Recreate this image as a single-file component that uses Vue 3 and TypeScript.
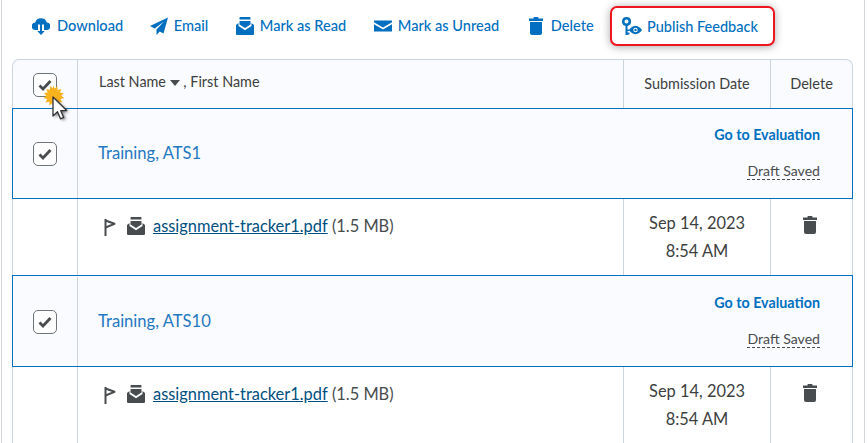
<script setup lang="ts">
interface Tool { label: string; icon: string }
const tools: Tool[] = [
  { label: 'Download', icon: 'download' },
  { label: 'Email', icon: 'send' },
  { label: 'Mark as Read', icon: 'read' },
  { label: 'Mark as Unread', icon: 'mail' },
  { label: 'Delete', icon: 'trash' },
]
const students = ['Training, ATS1', 'Training, ATS10']
</script>

<template>
  <div class="page">
    <div class="toolbar">
      <button v-for="t in tools" :key="t.label" class="tool">
        <svg class="ico" viewBox="0 0 18 18" fill="#006fbf">
          <template v-if="t.icon === 'download'">
            <path d="M6 13H3.700a3.700 3.700 0 0 1-.5-7.400A6 6 0 0 1 14.800 5.600 3.700 3.700 0 0 1 14.300 13H12V7.500H6z" />
            <path d="M8 7h2v7h2.800L9 18l-3.800-4H8z" />
          </template>
          <path v-else-if="t.icon === 'send'" d="M18 0.500 0 9l4.700 2.400L14 4.500 6.500 12.500V18l3.200-3.600 3.800 2z" />
          <template v-else-if="t.icon === 'read'">
            <path d="M4.500 0h9a1 1 0 0 1 1 1v1.500h-11V1a1 1 0 0 1 1-1zM3.500 4h11v3.500L9 11 3.500 7.500z" />
            <path d="M0 8l2.500-2v3L9 13.200 15.500 9V6L18 8v9a1 1 0 0 1-1 1H1a1 1 0 0 1-1-1z" />
          </template>
          <template v-else-if="t.icon === 'mail'">
            <path d="M0 3.500h18v1.700l-9 5.300-9-5.300z" />
            <path d="M0 7.200l9 5.300 9-5.300v7.300H0z" />
          </template>
          <template v-else>
            <path d="M6.500 1.500V.8a.8.8 0 0 1 .8-.8h3.400a.8.8 0 0 1 .8.800v.7H16v2.500H2V1.500z" />
            <path d="M3 5h12v11a2 2 0 0 1-2 2H5a2 2 0 0 1-2-2z" />
          </template>
        </svg>
        <span>{{ t.label }}</span>
      </button>
      <div class="tool highlight">
        <svg class="ico" viewBox="0 0 20 18" fill="#006fbf">
          <path fill-rule="evenodd" d="M4.500 0a4.500 4.500 0 0 1 1 8.900V12.500H7.500V14H5.500v1.500H7.500V17L5.500 18H3.500V8.900A4.500 4.500 0 0 1 4.500 0zm0 2.500a2 2 0 1 0 0 4 2 2 0 0 0 0-4z" />
          <path fill-rule="evenodd" d="M13.500 8.800c3 0 5.200 2.300 6.500 4.200-1.300 1.900-3.500 4.200-6.500 4.200S8.300 14.900 7 13c1.300-1.900 3.500-4.200 6.500-4.200zm0 2a2.200 2.200 0 1 0 0 4.400 2.200 2.200 0 0 0 0-4.400z" />
          <circle cx="13.500" cy="13" r="1.200" />
        </svg>
        <span>Publish Feedback</span>
      </div>
    </div>

    <div class="table">
      <div class="head">
        <div class="c-check"><span class="box"><svg viewBox="0 0 14 12" class="tick"><path d="M1.500 6.500 5 10l7.500-8" /></svg></span></div>
        <div class="c-name head-name">Last Name <i class="caret"></i> , First Name</div>
        <div class="c-date head-cell">Submission Date</div>
        <div class="c-del head-cell del-head">Delete</div>
      </div>
      <template v-for="(s, i) in students" :key="s">
        <div class="student" :class="{ later: i > 0 }">
          <div class="c-check"><span class="box"><svg viewBox="0 0 14 12" class="tick"><path d="M1.500 6.500 5 10l7.500-8" /></svg></span></div>
          <div class="student-main">
            <a class="student-name">{{ s }}</a>
            <div class="student-side">
              <a class="evaluate">Go to Evaluation</a>
              <span class="draft">Draft Saved</span>
            </div>
          </div>
        </div>
        <div class="file">
          <div class="c-check"></div>
          <div class="c-name file-name">
            <svg class="flag" viewBox="0 0 12 18" fill="none" stroke="#494c4e" stroke-width="2"><path d="M1.500 1v17" /><path d="M1.500 2.500 10.500 5.800 1.500 9.500" stroke-linejoin="round" /></svg>
            <svg class="fico" viewBox="0 0 18 18" fill="#494c4e">
              <path d="M4.500 0h9a1 1 0 0 1 1 1v1.500h-11V1a1 1 0 0 1 1-1zM3.500 4h11v3.500L9 11 3.500 7.500z" />
              <path d="M0 8l2.500-2v3L9 13.200 15.500 9V6L18 8v9a1 1 0 0 1-1 1H1a1 1 0 0 1-1-1z" />
            </svg>
            <a class="pdf">assignment-tracker1.pdf</a>&nbsp;<span>(1.5 MB)</span>
          </div>
          <div class="c-date file-date">Sep 14, 2023<br />8:54 AM</div>
          <div class="c-del file-del">
            <svg class="trash" viewBox="0 0 18 18" fill="#494c4e">
              <path d="M6.500 1.500V.8a.8.8 0 0 1 .8-.8h3.400a.8.8 0 0 1 .8.800v.7H16v2.500H2V1.500z" />
              <path d="M3 5h12v11a2 2 0 0 1-2 2H5a2 2 0 0 1-2-2z" />
            </svg>
          </div>
        </div>
      </template>
    </div>

    <div class="cursor">
      <svg viewBox="0 0 34 44" width="34" height="44">
        <defs>
          <filter id="soft" x="-40%" y="-40%" width="180%" height="180%"><feGaussianBlur stdDeviation="1.500" /></filter>
        </defs>
        <path transform="translate(13 14.500) scale(.86) translate(-17 -13.500)" d="M17 0l1.800 4.200L22 1.500l.4 4.400 4.300-1-1.500 4.100 4.400.5-3 3.200 3.600 2.500-4.300 1.200 1.900 4-4.400-.7.100 4.400-3.500-2.700-2 3.900-1.900-4-3.400 2.800.1-4.400-4.400.8 1.800-4.100-4.300-1.100 3.500-2.600-3-3.200 4.400-.6-1.600-4.100 4.300 1 .3-4.400 3.300 2.800z" fill="#f7b21c" />
        <path d="M13 15v19l4.500-4.200 3 7 3.200-1.400-3-6.700 6-.2z" fill="#333" opacity=".7" filter="url(#soft)" transform="translate(2 1.500)" />
        <path d="M13 15v19l4.500-4.200 3 7 3.200-1.400-3-6.700 6-.2z" fill="#fff" stroke="#333" stroke-width="1.300" stroke-linejoin="round" />
      </svg>
    </div>
  </div>
</template>

<style>
html, body { margin: 0; background: #fff; overflow: hidden; }
</style>

<style scoped>
.page {
  position: relative;
  width: 867px;
  height: 443px;
  box-sizing: border-box;
  overflow: hidden;
  padding: 0 12px;
  font-family: Lato, "Noto Sans", sans-serif;
  color: #494c4e;
  background: linear-gradient(#cfd4da, #cfd4da) 1px 0 / 1px 100% no-repeat,
    linear-gradient(#cfd4da, #cfd4da) 864px 0 / 1px 100% no-repeat, #fff;
}
.toolbar { display: flex; height: 59px; align-items: center; padding-left: 20px; box-sizing: border-box; padding-bottom: 8px; position: relative; }
.tool {
  display: flex;
  align-items: center;
  gap: 6px;
  border: 0;
  background: none;
  padding: 0;
  margin: 0 27.500px 0 0;
  font: 500 14.600px Lato, sans-serif;
  color: #006fbf;
}
.tool:first-child { gap: 7px; margin-right: 26.500px; }
.ico { width: 18px; height: 18px; display: block; flex: none; }
.highlight {
  position: absolute;
  left: 598px;
  top: 6px;
  width: 165px;
  height: 40px;
  box-sizing: border-box;
  margin: 0;
  padding-left: 10px;
  gap: 5px;
  font-size: 14.500px;
  border: 2px solid #ee1520;
  border-radius: 7px;
  box-shadow: 0 1px 9px rgba(0, 0, 0, .35);
  background: #fff;
}
.highlight .ico { width: 20px; }
.table { width: 841px; box-sizing: border-box; }
.head {
  display: grid;
  grid-template-columns: 65px 545px 147px 84px;
  height: 49px;
  box-sizing: border-box;
  border: 1px solid #cdd5dc;
  border-bottom: 0;
  border-radius: 7px 7px 0 0;
  background: #f9fbff;
  font-size: 14.400px;
}
.c-check { display: flex; justify-content: center; align-items: center; border-right: 1px solid #cdd5dc; box-sizing: border-box; }
.head .c-check { margin-left: -1px; padding-top: 1px; }
.head-name { padding: 0 0 5px 21px; display: flex; align-items: center; white-space: pre; color: #3d3f41; }
.caret { display: inline-block; width: 0; height: 0; margin: 2px 0 0 0; border: 5.500px solid transparent; border-top: 6px solid #494c4e; border-bottom: 0; }
.head-cell { display: flex; align-items: center; justify-content: center; border-left: 1px solid #cdd5dc; padding-bottom: 1px; color: #3d3f41; font-size: 14.400px; }
.del-head { font-size: 14.600px; padding-right: 2px; }
.box {
  width: 24px;
  height: 24px;
  box-sizing: border-box;
  border: 1px solid #6e7477;
  border-radius: 5px;
  background: #fff;
  display: flex;
  align-items: center;
  justify-content: center;
}
.tick { width: 14px; height: 12px; fill: none; stroke: #494c4e; stroke-width: 2.800; }
.student {
  display: grid;
  grid-template-columns: 65px 1fr;
  height: 91px;
  box-sizing: border-box;
  border: 1px solid #006fbf;
  background: #f9fbff;
  margin-bottom: -1px;
  position: relative;
}
.student.later { height: 92px; padding-top: 1px; }
.student .c-check { margin-left: -1px; }
.student-main { display: flex; justify-content: space-between; padding: 0 32px 0 20px; }
.student-name { font-size: 16.600px; color: #1f78c1; margin-top: 34px; }
.student-side { display: flex; flex-direction: column; align-items: flex-end; padding-top: 17px; }
.evaluate { font-size: 14.300px; font-weight: 700; color: #006fbf; line-height: 17px; }
.draft { margin-top: 20px; font-size: 14.100px; line-height: 16px; color: #494c4e; border-bottom: 1px dashed #494c4e; }
.file {
  display: grid;
  grid-template-columns: 65px 545px 147px 84px;
  height: 77px;
  box-sizing: border-box;
  border-left: 1px solid #cdd5dc;
  border-right: 1px solid #cdd5dc;
  padding-top: 1px;
}
.file .c-check { margin-left: -1px; }
.file-name { display: flex; align-items: flex-start; padding: 17px 0 0 26px; font-size: 16.400px; line-height: 20px; color: #494c4e; white-space: nowrap; }
.flag { width: 12px; height: 18px; margin: 2px 11px 0 0; flex: none; }
.fico { width: 18px; height: 18px; margin: 1px 8px 0 0; flex: none; }
.pdf { color: #00507f; text-decoration: underline; }
.file-date { border-left: 1px solid #cdd5dc; text-align: center; font-size: 16.400px; line-height: 28px; padding-top: 10px; color: #3d3f41; }
.file-del { border-left: 1px solid #cdd5dc; display: flex; justify-content: center; padding: 17px 5px 0 0; }
.trash { width: 18px; height: 18px; }
.cursor { position: absolute; left: 40px; top: 82px; width: 34px; height: 44px; }
</style>
